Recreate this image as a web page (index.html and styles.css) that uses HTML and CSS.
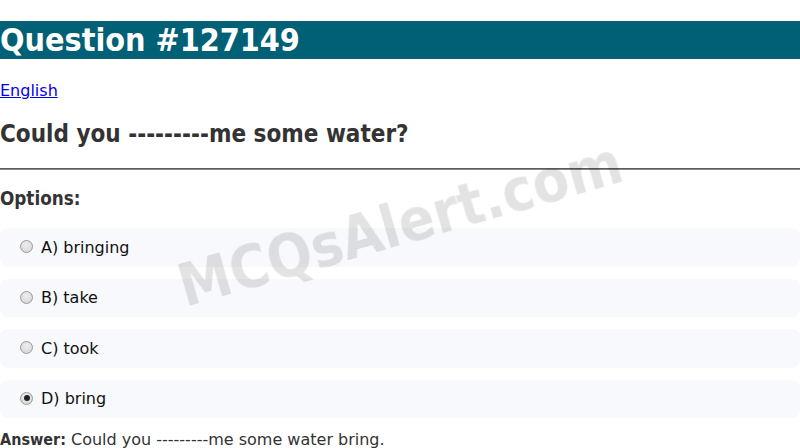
FILE: index.html
```
<!DOCTYPE html>
<html>
<head>
<meta charset="utf-8">
<link rel="stylesheet" href="styles.css">
</head>
<body>
<h1 class="title">Question #127149</h1>
<p class="lang"><a href="#">English</a></p>
<h2 class="question">Could you ---------me some water?</h2>
<hr class="rule">
<h3 class="options-title">Options:</h3>
<div class="options">
  <label class="option"><input class="radio" type="radio" name="opt"><span>A) bringing</span></label>
  <label class="option"><input class="radio" type="radio" name="opt"><span>B) take</span></label>
  <label class="option"><input class="radio" type="radio" name="opt"><span>C) took</span></label>
  <label class="option"><input class="radio" type="radio" name="opt" checked><span>D) bring</span></label>
</div>
<p class="answer"><strong>Answer:</strong> Could you ---------me some water bring.</p>
<div class="watermark">MCQsAlert.com</div>
</body>
</html>
```
FILE: styles.css
```
html, body {
  margin: 0;
  padding: 0;
}
body {
  font-family: "DejaVu Sans", Verdana, sans-serif;
  font-size: 16px;
  color: #333;
  background: #fff;
  overflow: hidden;
}
.title, .question, .options-title, .answer strong, .watermark {
  font-family: "DejaVu Sans Condensed", "DejaVu Sans", sans-serif;
  font-stretch: semi-condensed;
  font-weight: bold;
}
.title {
  background: #006075;
  color: #fff;
  font-size: 32px;
  margin: 21.44px 0;
}
.lang {
  margin: 16px 0;
}
.lang a {
  color: #0000ee;
}
.question {
  font-size: 24px;
  margin: 19.92px 0;
}
.rule {
  margin: 8px 0;
  height: 0;
  border: 0;
  border-top: 1px solid #5a5a5a;
  border-bottom: 1px solid #8a8a8a;
}
.options-title {
  font-size: 18.72px;
  margin: 18.72px 0;
}
.options {
  display: flex;
  flex-direction: column;
  gap: 12px;
}
.option {
  display: flex;
  align-items: center;
  height: 38.5px;
  box-sizing: border-box;
  background: #f8f9fc;
  border-radius: 8px;
  padding: 0 15px 0 20px;
  color: #111;
}
.radio {
  appearance: none;
  -webkit-appearance: none;
  width: 13px;
  height: 13px;
  margin: 0 8px 1px 0;
  border: 1px solid #9a9a9a;
  border-radius: 50%;
  background: radial-gradient(circle at 50% 35%, #eeeeee 0%, #d2d2d2 100%);
  box-sizing: border-box;
  position: relative;
  flex: none;
}
.radio:checked::after {
  content: "";
  position: absolute;
  left: 2.5px;
  top: 2.5px;
  width: 6px;
  height: 6px;
  border-radius: 50%;
  background: #222;
}
.answer {
  margin: 12px 0;
}
.watermark {
  position: fixed;
  left: 50%;
  top: 50%;
  transform: translate(-50%, -50%) rotate(-16deg);
  font-size: 59px;
  color: rgba(0, 0, 0, 0.11);
  white-space: nowrap;
  pointer-events: none;
}
```
